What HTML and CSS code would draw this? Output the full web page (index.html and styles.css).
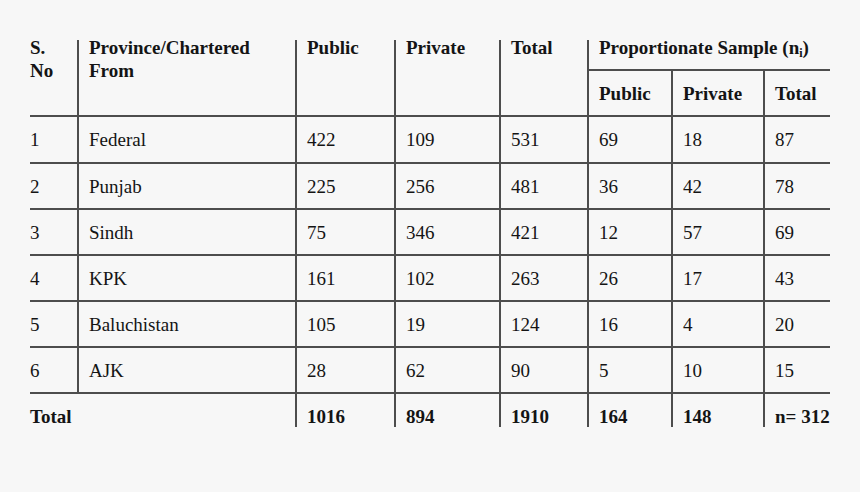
FILE: index.html
```html
<!DOCTYPE html>
<html>
<head>
<meta charset="utf-8">
<link rel="stylesheet" href="styles.css">
</head>
<body>
<table class="data">
  <colgroup>
    <col class="c-sno">
    <col class="c-prov">
    <col class="c-pub">
    <col class="c-priv">
    <col class="c-tot">
    <col class="c-spub">
    <col class="c-spriv">
    <col class="c-stot">
  </colgroup>
  <thead>
    <tr class="h1">
      <th rowspan="2" class="first hb"><div class="ht">S.<br>No</div></th>
      <th rowspan="2" class="vl hb"><div class="ht">Province/Chartered<br>From</div></th>
      <th rowspan="2" class="vl hb"><div class="ht">Public</div></th>
      <th rowspan="2" class="vl hb"><div class="ht">Private</div></th>
      <th rowspan="2" class="vl hb"><div class="ht">Total</div></th>
      <th colspan="3" class="vl hb"><div class="ht">Proportionate Sample (n<sub>i</sub>)</div></th>
    </tr>
    <tr class="h2">
      <th class="vl hb">Public</th>
      <th class="vl hb">Private</th>
      <th class="vl hb">Total</th>
    </tr>
  </thead>
  <tbody>
    <tr class="row row-first"><td class="first">1</td><td class="vl">Federal</td><td class="vl">422</td><td class="vl">109</td><td class="vl">531</td><td class="vl">69</td><td class="vl">18</td><td class="vl">87</td></tr>
    <tr class="row"><td class="first">2</td><td class="vl">Punjab</td><td class="vl">225</td><td class="vl">256</td><td class="vl">481</td><td class="vl">36</td><td class="vl">42</td><td class="vl">78</td></tr>
    <tr class="row"><td class="first">3</td><td class="vl">Sindh</td><td class="vl">75</td><td class="vl">346</td><td class="vl">421</td><td class="vl">12</td><td class="vl">57</td><td class="vl">69</td></tr>
    <tr class="row"><td class="first">4</td><td class="vl">KPK</td><td class="vl">161</td><td class="vl">102</td><td class="vl">263</td><td class="vl">26</td><td class="vl">17</td><td class="vl">43</td></tr>
    <tr class="row"><td class="first">5</td><td class="vl">Baluchistan</td><td class="vl">105</td><td class="vl">19</td><td class="vl">124</td><td class="vl">16</td><td class="vl">4</td><td class="vl">20</td></tr>
    <tr class="row"><td class="first">6</td><td class="vl">AJK</td><td class="vl">28</td><td class="vl">62</td><td class="vl">90</td><td class="vl">5</td><td class="vl">10</td><td class="vl">15</td></tr>
    <tr class="total"><td colspan="2" class="first">Total</td><td class="vl">1016</td><td class="vl">894</td><td class="vl">1910</td><td class="vl">164</td><td class="vl">148</td><td class="vl">n= 312</td></tr>
  </tbody>
</table>
</body>
</html>
```

FILE: styles.css
```css
html, body {
  margin: 0;
  padding: 0;
  background: #f7f7f7;
}

body {
  width: 860px;
  height: 492px;
  overflow: hidden;
  font-family: "Liberation Serif", Tinos, "Times New Roman", Times, "DejaVu Serif", serif;
  font-size: 19px;
  color: #141414;
}

.data {
  margin: 40px 0 0 30px;
  width: 800px;
  table-layout: fixed;
  border-collapse: collapse;
  font-family: "Liberation Serif", Tinos, "Times New Roman", Times, "DejaVu Serif", serif;
}

.c-sno { width: 48px; }
.c-prov { width: 218px; }
.c-pub { width: 99px; }
.c-priv { width: 105px; }
.c-tot { width: 88px; }
.c-spub { width: 84px; }
.c-spriv { width: 92px; }
.c-stot { width: 66px; }

.data th,
.data td {
  padding: 0 0 0 10px;
  text-align: left;
  white-space: nowrap;
  line-height: 23px;
  border: 0;
}

.data th {
  font-weight: bold;
}

.data .first {
  padding-left: 0;
}

.data .vl {
  border-left: 2px solid #4d4d4d;
}

.data .hb {
  border-bottom: 2px solid #4d4d4d;
}

.data .h1 th {
  vertical-align: top;
  height: 29px;
}

.data .h1 .ht {
  margin-top: -4px;
}

.data .h2 th {
  height: 44px;
  vertical-align: middle;
}

.data sub {
  font-size: 12px;
  line-height: 0;
  vertical-align: -3px;
}

.data .row td {
  height: 44px;
  vertical-align: middle;
  border-bottom: 2px solid #4d4d4d;
}

.data .row-first td {
  height: 45px;
}

.data .total td {
  height: 34px;
  vertical-align: top;
  font-weight: bold;
  padding-top: 12px;
  line-height: 21px;
  box-sizing: border-box;
}

.data .total td.first {
  padding-left: 0;
}
```
